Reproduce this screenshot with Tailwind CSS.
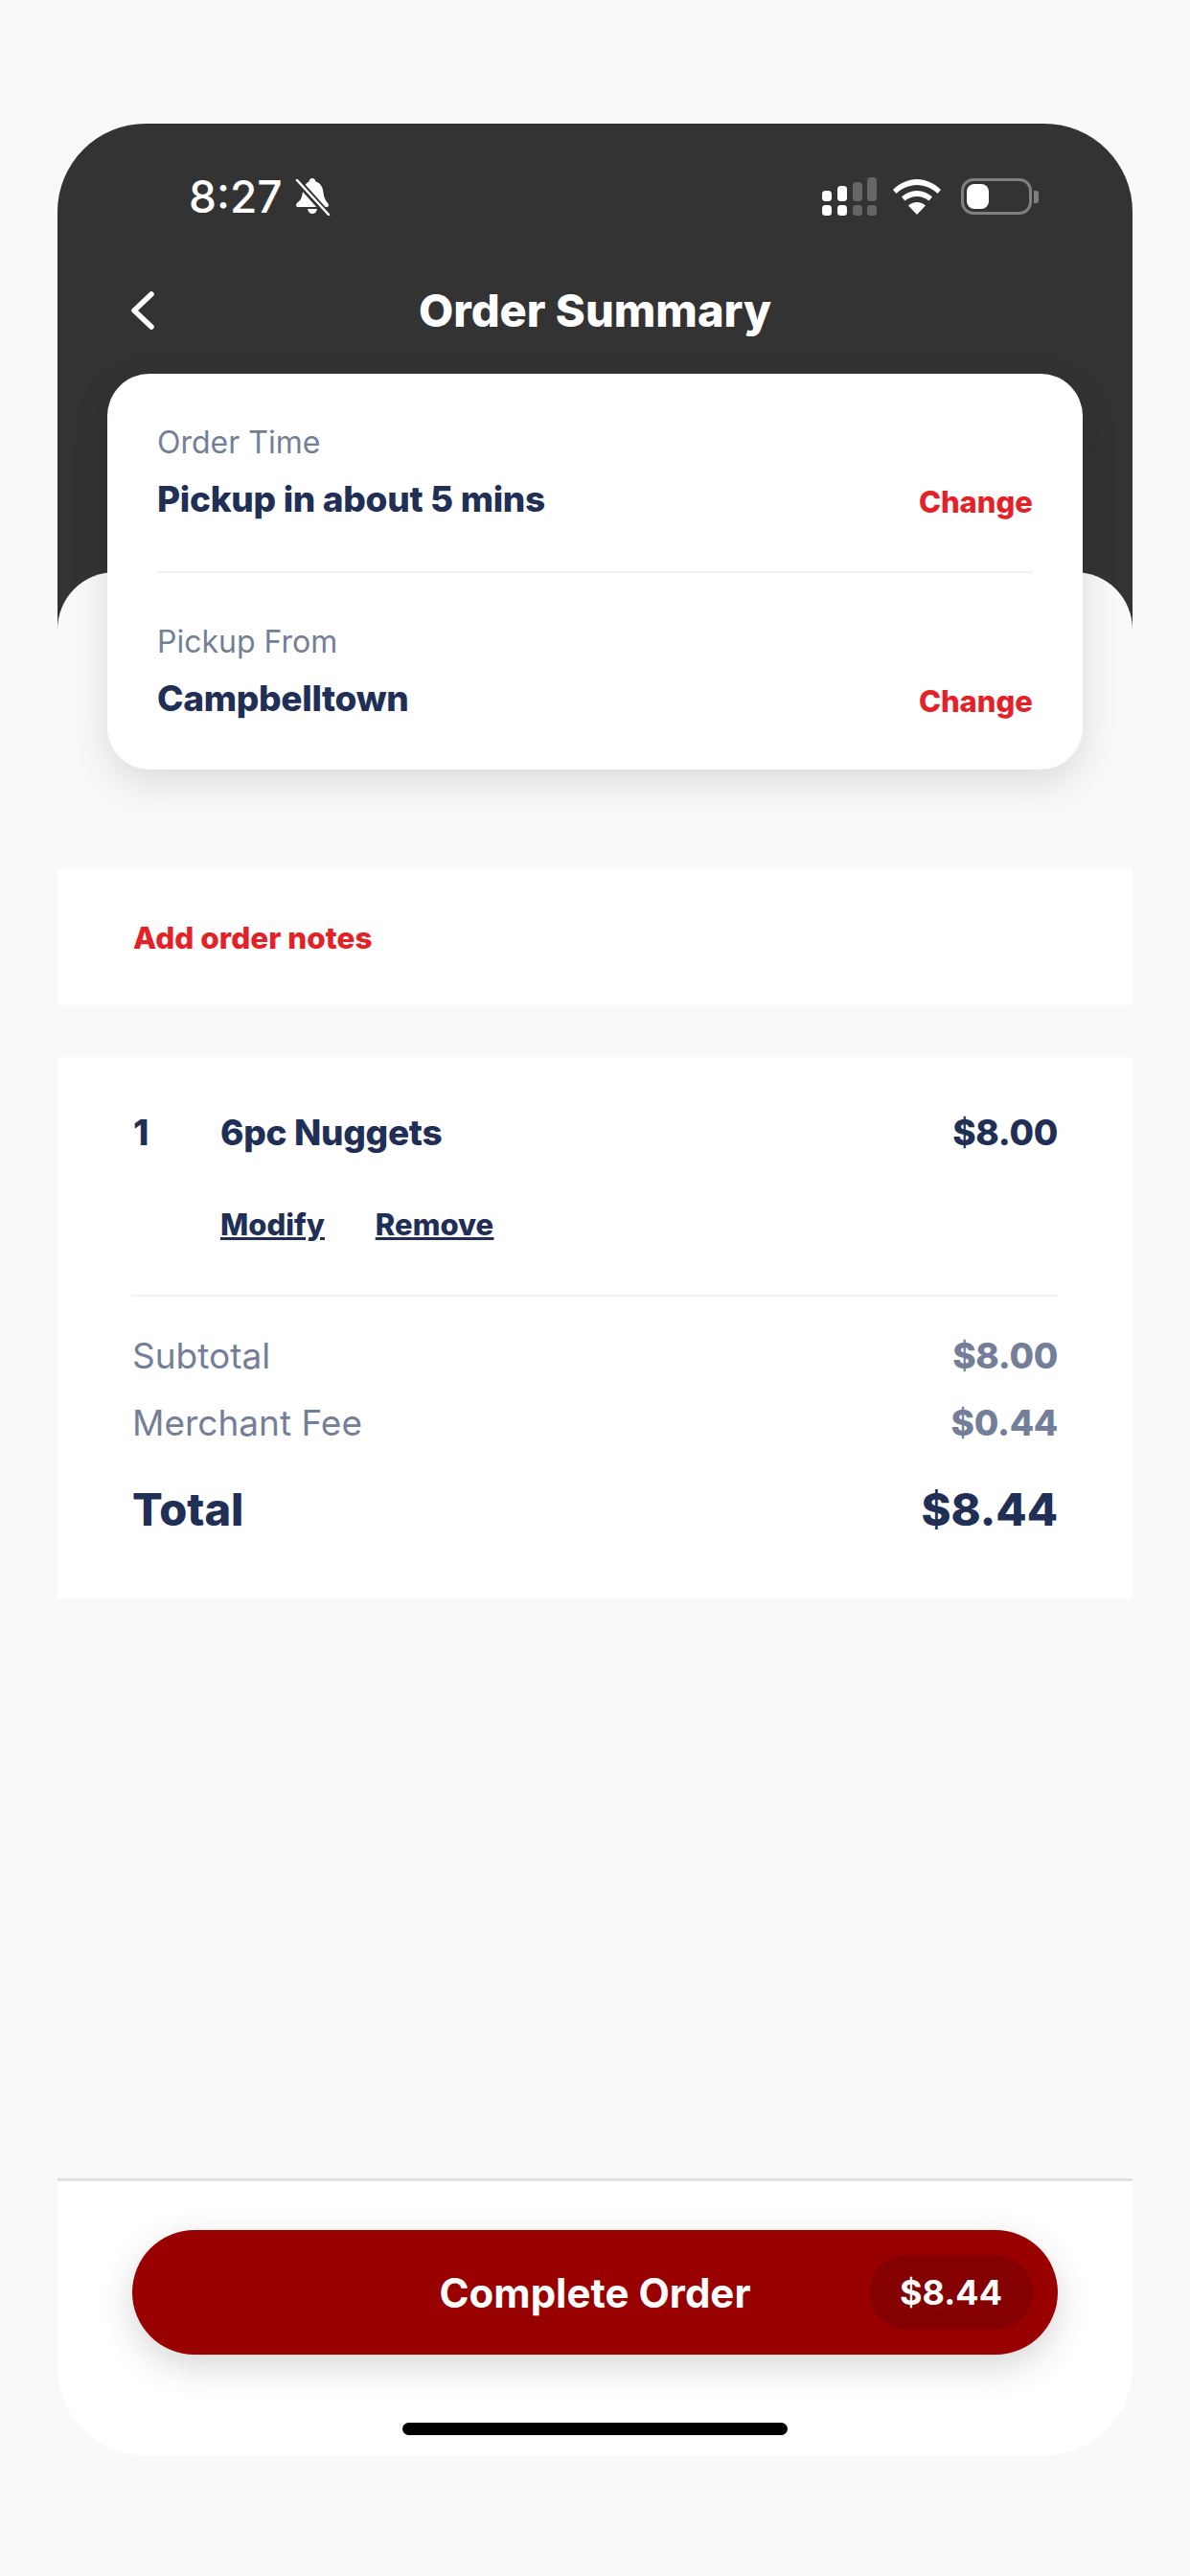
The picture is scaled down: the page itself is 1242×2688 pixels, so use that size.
<!DOCTYPE html>
<html lang="en">
<head>
    <meta charset="UTF-8">
    <title>Order Summary</title>
    <script src="https://cdn.jsdelivr.net/npm/@tailwindcss/browser@4"></script>
</head>
<body class="bg-[#f9f9f9] font-['Inter',sans-serif]">
<div class="w-[1242px] h-[2688px] pt-[129px] px-[60px]">
    <div class="h-[2433px] flex flex-col">

        <!-- Header -->
        <header class="h-[531px] bg-[#333333] rounded-t-[92px] text-white">
            <div class="flex items-center h-[40px] translate-y-[56px]">
                <span class="ml-[137px] text-[46px] leading-[40px] font-medium">8:27</span>
                <svg class="ml-[13px]" width="37" height="40" viewBox="0 0 37 40">
                    <path fill="#fff" d="M18 1c2 0 3 1.500 3.500 3.500C27 6 29 11 29.500 16c.5 5 2 8 5 11.500 1 1.500.5 3.500-1.500 3.500H3c-2 0-2.500-2-1.500-3.500C4 25 6 24 7 20c.8-3 1-6 2-9C10.500 7 13 5 14.500 4.500 15 2 16 1 18 1zM13 33h10c-.5 3-2.500 5-5 5s-4.500-2-5-5z"/>
                    <path stroke="#333333" stroke-width="7" d="M0 1l36 40"/>
                    <path stroke="#fff" stroke-width="2.500" stroke-linecap="round" d="M2 3l33 36"/>
                </svg>
                <svg class="ml-[513px]" width="57" height="40" viewBox="0 0 57 40">
                    <g fill="#fff">
                        <rect x="0" y="14" width="10" height="11" rx="3.500"/>
                        <rect x="16" y="9" width="10" height="16" rx="3.500"/>
                        <rect x="0" y="29" width="10" height="11" rx="3.500"/>
                        <rect x="16" y="29" width="10" height="11" rx="3.500"/>
                    </g>
                    <g fill="#666666">
                        <rect x="32" y="5" width="10" height="20" rx="3.500"/>
                        <rect x="47" y="0" width="10" height="25" rx="3.500"/>
                        <rect x="32" y="29" width="10" height="11" rx="3.500"/>
                        <rect x="47" y="29" width="10" height="11" rx="3.500"/>
                    </g>
                </svg>
                <svg class="ml-[17px]" width="50" height="38" viewBox="0 0 50 38">
                    <path fill="#fff" d="M25 1c9 0 18 4 25 11l-3.500 4C41 10.500 33 7 25 7S9 10.500 3.500 16L0 12C7 5 16 1 25 1zM25 13c6 0 11.500 2.400 16 6.500l-3.500 4C34 20.500 29.500 19 25 19s-9 1.500-12.500 4.500L9 19.500C13.500 15.400 19 13 25 13zM25 25c3.500 0 6.500 1.300 9 3.500L25 38l-9-9.500c2.500-2.200 5.500-3.500 9-3.500z"/>
                </svg>
                <div class="ml-[21px] w-[74px] h-[38px] rounded-[13px] border-[3px] border-[#7f7f7f] p-[3px]">
                    <div class="w-[23px] h-full rounded-[8px] bg-white"></div>
                </div>
                <div class="ml-[2px] w-[5px] h-[13px] rounded-r-[3px] bg-[#7f7f7f]"></div>
            </div>
            <div class="relative mt-[125px] h-[60px] flex items-center justify-center">
                <svg class="absolute left-[76px] top-[10px]" width="26" height="40" viewBox="0 0 26 40" fill="none">
                    <path stroke="#fff" stroke-width="5.500" stroke-linecap="round" stroke-linejoin="round" d="M22 3L4 20l18 17"/>
                </svg>
                <h1 class="text-[47px] leading-[60px] font-extrabold">Order Summary</h1>
            </div>
        </header>

        <!-- Body -->
        <main class="flex-1 -mt-[63px] rounded-t-[60px] bg-[#f9f9f9] flex flex-col">
            <section class="relative -mt-[207px] mx-[52px] h-[413px] rounded-[44px] bg-white shadow-[0_14px_40px_rgba(0,0,0,0.12)] px-[52px]">
                <div class="h-[208px] pt-[51px] border-b-2 border-[#f0f0f0]">
                    <p class="text-[32px] leading-[42px] text-[#737f99]">Order Time</p>
                    <div class="mt-[16px] flex justify-between items-center">
                        <p class="text-[37px] leading-[44px] tracking-[-0.3px] font-extrabold text-[#1f2f56]">Pickup in about 5 mins</p>
                        <button class="text-[31px] leading-[44px] font-extrabold text-[#e32228] relative top-[3px]">Change</button>
                    </div>
                </div>
                <div class="pt-[51px]">
                    <p class="text-[32px] leading-[42px] text-[#737f99]">Pickup From</p>
                    <div class="mt-[16px] flex justify-between items-center">
                        <p class="text-[37px] leading-[44px] tracking-[-0.3px] font-extrabold text-[#1f2f56]">Campbelltown</p>
                        <button class="text-[31px] leading-[44px] font-extrabold text-[#e32228] relative top-[3px]">Change</button>
                    </div>
                </div>
            </section>

            <section class="mt-[104px] h-[142px] bg-white px-[79px] pt-[2px] flex items-center">
                <button class="text-[31.500px] font-extrabold text-[#e32228]">Add order notes</button>
            </section>

            <section class="mt-[54px] h-[565px] bg-white px-[78px] pt-[56px] flex flex-col">
                <div class="flex items-center justify-between text-[37px] leading-[46px] tracking-[-0.3px] font-extrabold text-[#1f2f56]">
                    <div class="flex">
                        <span class="w-[92px] pl-px">1</span>
                        <span>6pc Nuggets</span>
                    </div>
                    <span>$8.00</span>
                </div>
                <div class="ml-[92px] mt-[50px] flex gap-[53px] text-[31px] leading-[46px] font-extrabold text-[#1f2f56] underline">
                    <a href="#">Modify</a>
                    <a href="#">Remove</a>
                </div>
                <div class="mt-[50px] border-t-2 border-[#f0f0f0]"></div>
                <div class="mt-[39px] flex justify-between text-[#737f99]">
                    <span class="text-[37px] leading-[46px]">Subtotal</span>
                    <span class="text-[37px] leading-[46px] tracking-[-0.3px] font-extrabold">$8.00</span>
                </div>
                <div class="mt-[24px] flex justify-between text-[#737f99]">
                    <span class="text-[37px] leading-[46px]">Merchant Fee</span>
                    <span class="text-[37px] leading-[46px] tracking-[-0.3px] font-extrabold">$0.44</span>
                </div>
                <div class="mt-[37px] flex justify-between text-[47px] leading-[60px] font-extrabold text-[#1f2f56]">
                    <span>Total</span>
                    <span>$8.44</span>
                </div>
            </section>

            <!-- Footer -->
            <footer class="mt-auto h-[289px] bg-white border-t-[3px] border-[#e0e0e0] rounded-b-[92px] px-[78px] pt-[51px] flex flex-col">
                <button class="relative h-[130px] rounded-full bg-[#990000] shadow-[0_12px_36px_rgba(0,0,0,0.16)] flex items-center justify-center text-white text-[42px] font-bold">
                    Complete Order
                    <span class="absolute right-[26px] top-[26px] h-[78px] w-[171px] rounded-full bg-[#850000] flex items-center justify-center text-[36px]">$8.44</span>
                </button>
                <div class="mt-[71px] mx-auto w-[402px] h-[13px] rounded-[7px] bg-black"></div>
            </footer>
        </main>
    </div>
</div>
</body>
</html>
